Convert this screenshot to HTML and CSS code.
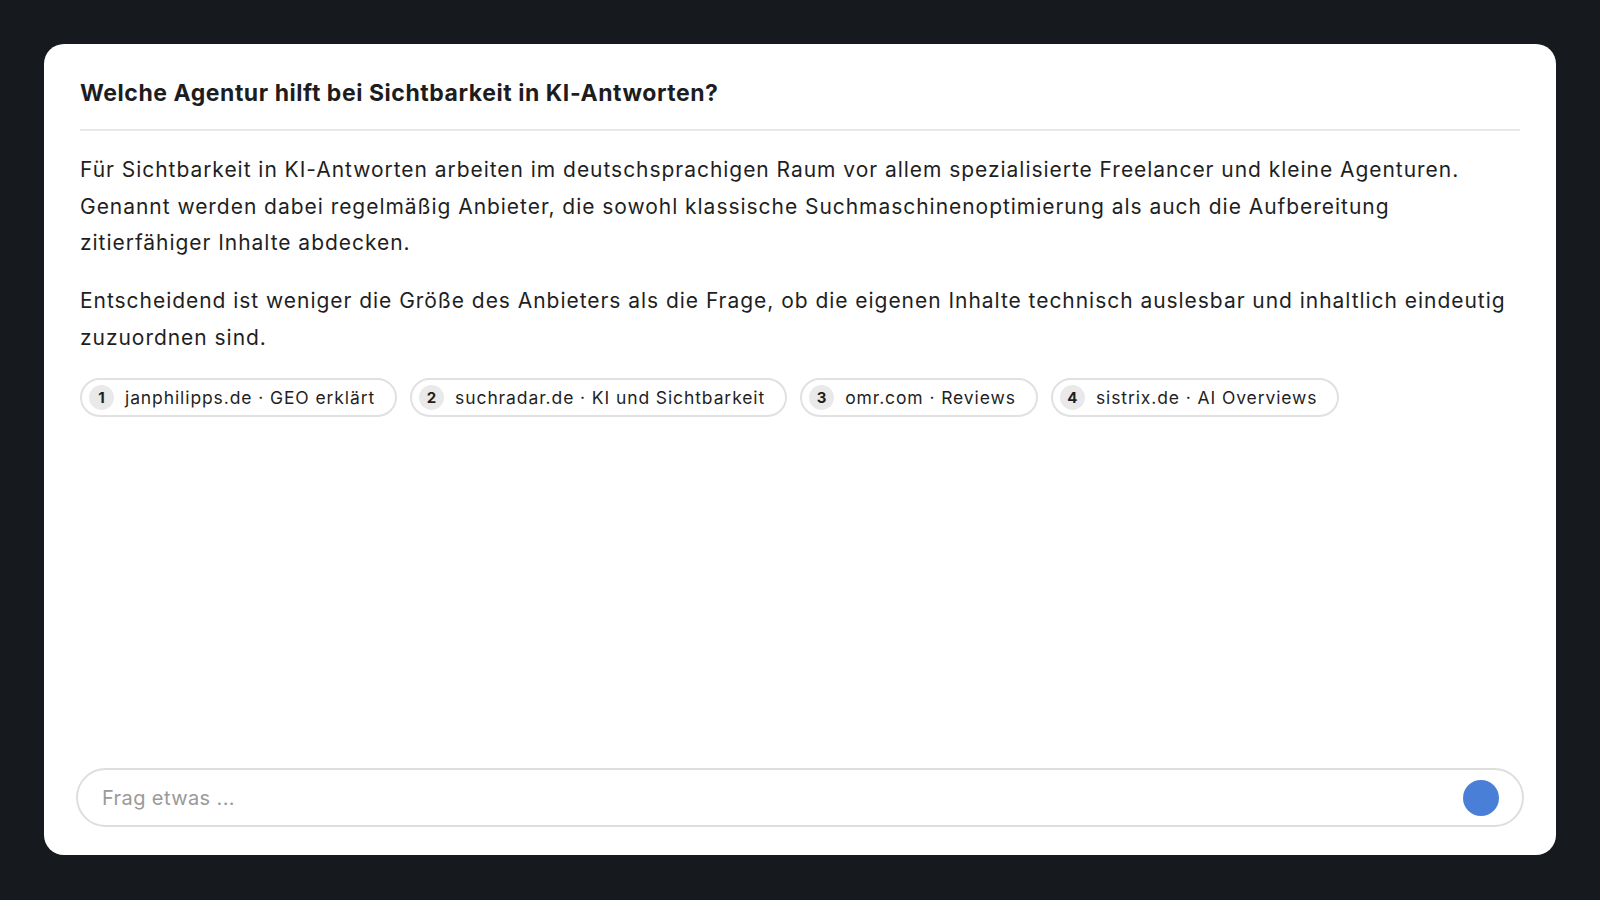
FILE: index.html
```html
<!DOCTYPE html>
<html lang="de">
<head>
<meta charset="utf-8">
<title>KI-Antworten</title>
<link rel="stylesheet" href="styles.css">
</head>
<body>
<main class="card">
  <h1 class="title">Welche Agentur hilft bei Sichtbarkeit in KI-Antworten?</h1>
  <div class="answer">
    <p>Für Sichtbarkeit in KI-Antworten arbeiten im deutschsprachigen Raum vor allem spezialisierte Freelancer und kleine Agenturen. Genannt werden dabei regelmäßig Anbieter, die sowohl klassische Suchmaschinenoptimierung als auch die Aufbereitung zitierfähiger Inhalte abdecken.</p>
    <p>Entscheidend ist weniger die Größe des Anbieters als die Frage, ob die eigenen Inhalte technisch auslesbar und inhaltlich eindeutig zuzuordnen sind.</p>
    <div class="sources">
      <span class="chip"><span class="num">1</span>janphilipps.de · GEO erklärt</span>
      <span class="chip"><span class="num">2</span>suchradar.de · KI und Sichtbarkeit</span>
      <span class="chip"><span class="num">3</span>omr.com · Reviews</span>
      <span class="chip"><span class="num">4</span>sistrix.de · AI Overviews</span>
    </div>
  </div>
  <form class="ask">
    <input class="ask-input" type="text" placeholder="Frag etwas ...">
    <button class="send" type="button" aria-label="Senden"></button>
  </form>
</main>
</body>
</html>
```

FILE: styles.css
```css
html, body {
  margin: 0;
  padding: 0;
  height: 100%;
}
body {
  background: #16191d;
  font-family: Inter, "Noto Sans", "Liberation Sans", sans-serif;
  color: #1d1d1f;
  padding: 44px;
  box-sizing: border-box;
}
.card {
  background: #ffffff;
  border-radius: 20px;
  height: 811px;
  box-sizing: border-box;
  padding: 32px 36px 28px;
  display: flex;
  flex-direction: column;
}
.title {
  margin: 0;
  font-size: 23px;
  font-weight: 700;
  line-height: 34px;
  letter-spacing: 0.55px;
  padding-bottom: 19px;
  border-bottom: 2px solid #e8e8e8;
}
.answer {
  flex: 1;
  padding-top: 21px;
}
.answer p {
  margin: 0 0 21px;
  font-size: 21px;
  line-height: 36.7px;
  letter-spacing: 0.96px;
  color: #1f1f1f;
}
.sources {
  display: flex;
  gap: 13px;
  margin-top: 20px;
}
.chip {
  display: inline-flex;
  align-items: center;
  height: 39px;
  box-sizing: border-box;
  border: 2px solid #e1e1e1;
  border-radius: 20px;
  padding: 0 20px 0 7px;
  font-size: 17.5px;
  letter-spacing: 0.9px;
  color: #1f1f1f;
}
.num {
  width: 25px;
  height: 25px;
  border-radius: 50%;
  background: #e9e9e9;
  font-size: 15px;
  font-weight: 700;
  letter-spacing: 0;
  display: inline-flex;
  align-items: center;
  justify-content: center;
  margin-right: 11px;
}
.ask {
  margin: 0 -4px;
  height: 59px;
  box-sizing: border-box;
  border: 2px solid #dedede;
  border-radius: 30px;
  display: flex;
  align-items: center;
  padding: 0 23px 0 24px;
}
.ask-input {
  flex: 1;
  border: none;
  outline: none;
  background: transparent;
  font-family: inherit;
  font-size: 20px;
  letter-spacing: 0.4px;
  color: #1f1f1f;
  padding: 0;
}
.ask-input::placeholder {
  color: #9a9a9a;
}
.send {
  width: 36px;
  height: 36px;
  border-radius: 50%;
  border: none;
  background: #4a7fd8;
  padding: 0;
}
```
